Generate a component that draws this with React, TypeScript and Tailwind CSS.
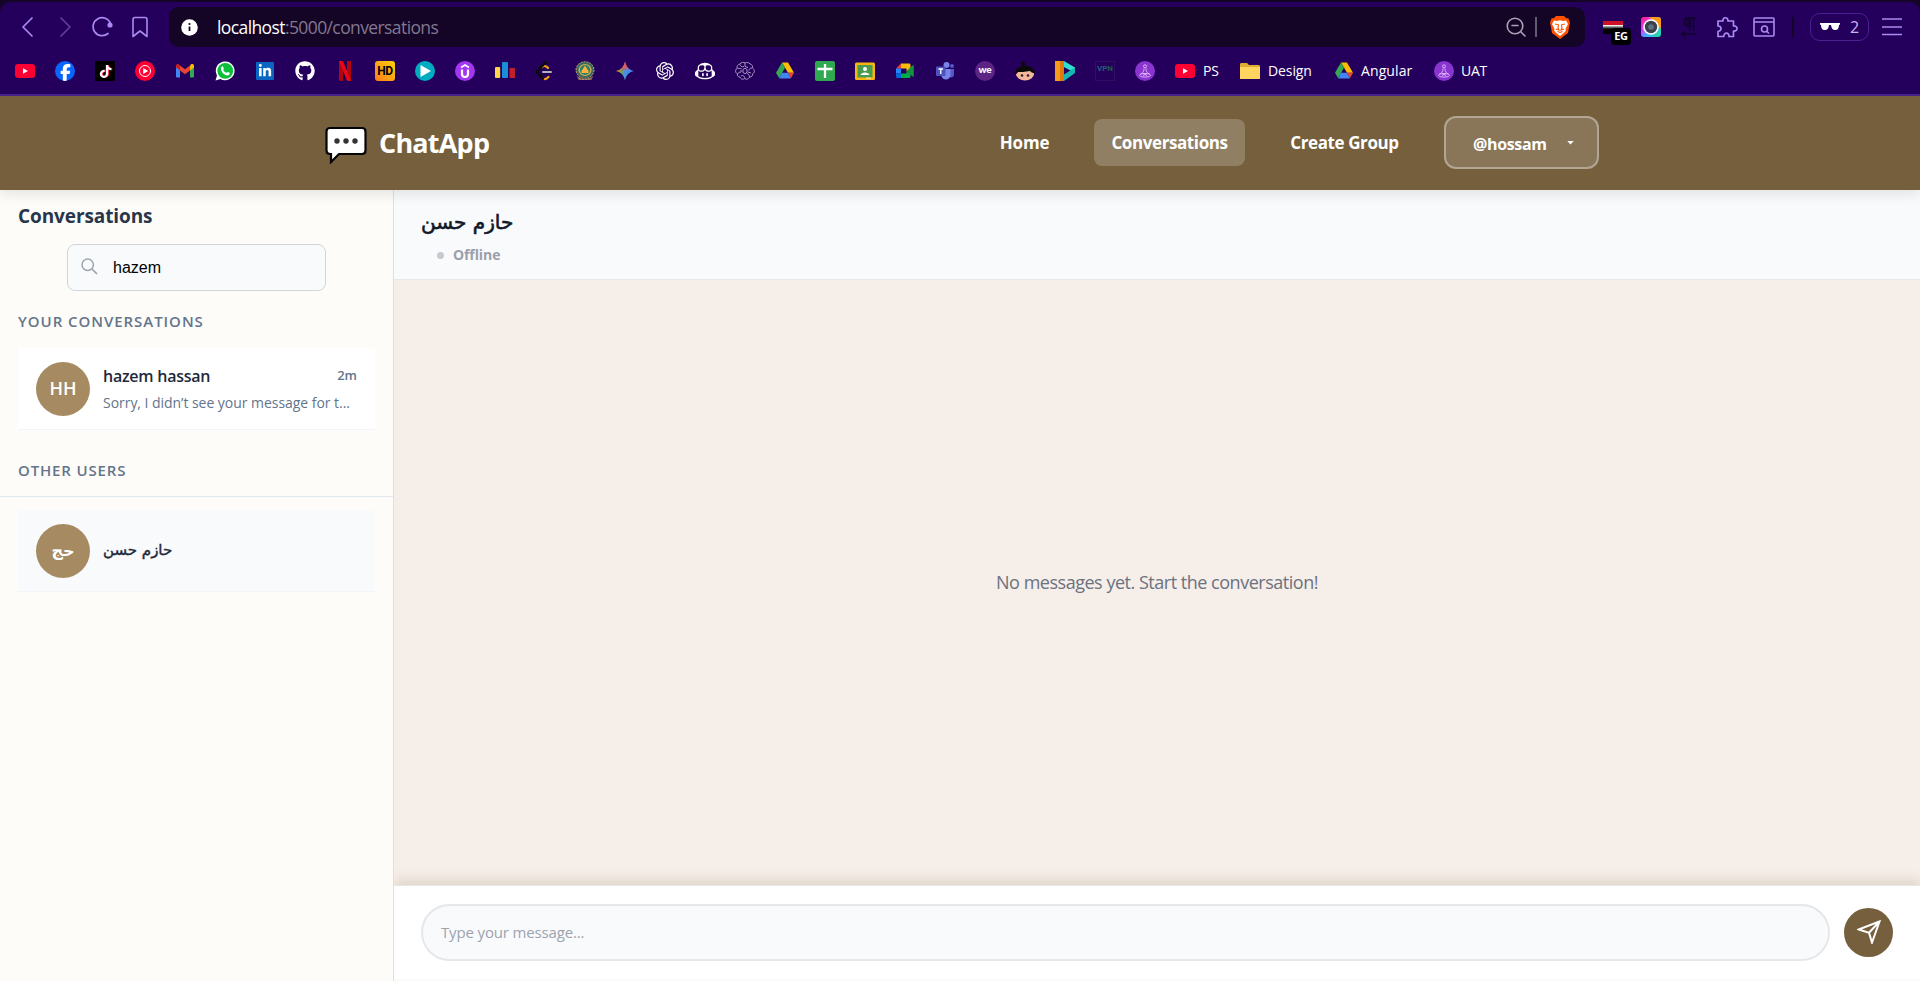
import React from "react";
import { FaFacebookF, FaTiktok, FaWhatsapp, FaLinkedinIn, FaGithub } from "react-icons/fa6";
import { SiOpenai, SiGithubcopilot } from "react-icons/si";

const UI = "font-['Open_Sans','Noto_Sans','DejaVu_Sans',sans-serif]";

function Svg({ children, box = "0 0 20 20", className = "size-5" }: { children: React.ReactNode; box?: string; className?: string }) {
  return (
    <svg viewBox={box} className={`block shrink-0 ${className}`} fill="none">
      {children}
    </svg>
  );
}

function YouTube({ className = "size-5" }: { className?: string }) {
  return (
    <Svg className={className}>
      <rect y="3" width="20" height="14" rx="3" fill="#ff0033" />
      <path d="M8 7.2v5.6l5-2.8z" fill="#fff" />
    </Svg>
  );
}

function Drive() {
  return (
    <Svg>
      <path d="M7 1.5h6l6 10.3h-6z" fill="#fbbc04" />
      <path d="M13 11.8h6l-3.2 5.7z" fill="#ea4335" />
      <path d="M7 1.5 10 6.700 4.200 17.300 1 11.800z" fill="#34a853" />
      <path d="M7 11.800h6l2.800 5.700H4.200z" fill="#4285f4" />
    </Svg>
  );
}

function Yogi() {
  return (
    <Svg>
      <circle cx="10" cy="10" r="10" fill="#8a35d0" />
      <g stroke="#e0b8f8" strokeWidth="0.9">
        <circle cx="10" cy="5.3" r="1.5" />
        <path d="M9 7.500c0 3-1 4.500-4 6M11 7.500c0 3 1 4.500 4 6M8 12.500l4 2M12 12.500l-4 2" />
        <ellipse cx="10" cy="14.300" rx="5.500" ry="1.800" />
      </g>
    </Svg>
  );
}

const bookmarks: React.ReactNode[] = [
  <YouTube />,
  <span className="flex size-5 items-end justify-center overflow-hidden rounded-full bg-[#0866ff]"><FaFacebookF className="size-[17px] text-white" /></span>,
  <span className="flex size-5 items-center justify-center bg-black"><FaTiktok className="size-[13px] text-white drop-shadow-[1px_0_0_#fe2c55]" /></span>,
  <Svg>
    <circle cx="10" cy="10" r="10" fill="#ff0033" />
    <circle cx="10" cy="10" r="5.5" stroke="#fff" strokeWidth="1" />
    <path d="M8.200 7v6l5-3z" fill="#fff" />
  </Svg>,
  <Svg>
    <path d="M1 5v10.500c0 .6.500 1 1 1h3V8z" fill="#4285f4" />
    <path d="M15 8v8.500h3c.6 0 1-.4 1-1V5z" fill="#34a853" />
    <path d="M15 5v4.500l4-3V5c0-2-2-2.500-3.200-1.500z" fill="#fbbc04" />
    <path d="M5 5v4.500l5 3.800 5-3.800V4.500L10 8.300 5 4.500z" fill="#ea4335" />
    <path d="M1 5v1.500l4 3V4.500l-.8-1C3 2.500 1 3 1 5z" fill="#c5221f" />
  </Svg>,
  <span className="relative flex size-5 items-center justify-center">
    <Svg>
      <path d="M.5 19.500 2 14.500A9.400 9.400 0 1 1 5.500 18z" fill="#fff" />
      <circle cx="10.200" cy="9.800" r="7.900" fill="#0bbf3b" />
      <path d="M6.900 5.600c.5-.4 1-.3 1.200.1l.8 1.700c.1.400-.7 1.100-.7 1.400.7 1.500 1.800 2.500 3.200 3 .4.100 1-1 1.400-.9l1.800.9c.5.300 0 1.800-.6 2.200-2 1.200-4.500-.2-6-1.800-1.500-1.600-3-4.600-1.100-6.600z" fill="#fff" />
    </Svg>
  </span>,
  <span className="mx-px flex size-[18px] items-center justify-center rounded-[1px] bg-[#0a66c2]"><FaLinkedinIn className="size-[14px] text-white" /></span>,
  <FaGithub className="size-5 text-white" />,
  <Svg>
    <path d="M4 0h4v20l-4-.4zM12 0h4v20l-4-.5z" fill="#b1060f" />
    <path d="M4 0h4l8 20-4-.5z" fill="#e50914" />
  </Svg>,
  <span className="flex size-5 items-center justify-center rounded-[3px] bg-linear-to-tr from-[#ff7a1a] to-[#ffd000] font-['Roboto',sans-serif] text-[12px] font-bold tracking-[-0.5px] text-black">HD</span>,
  <Svg>
    <circle cx="10" cy="10" r="10" fill="#00acc1" />
    <path d="M5.500 4v12l10.500-6z" fill="#fff" />
  </Svg>,
  <Svg>
    <circle cx="10" cy="10" r="10" fill="#a435f0" />
    <path d="M7 8.500V13c0 4 6 4 6 0V8.500" stroke="#fff" strokeWidth="2.200" />
    <path d="M6 6.500 10 4l4 2.500" stroke="#fff" strokeWidth="1.600" />
  </Svg>,
  <Svg>
    <rect x="0" y="6" width="5.200" height="11" rx="1" fill="#ffd54f" />
    <rect x="7" y="1" width="6" height="16" rx="1" fill="#1a8fd8" />
    <rect x="14.500" y="7" width="5.500" height="10" rx="1" fill="#c2202b" />
  </Svg>,
  <Svg>
    <path d="M7 6C8.500 4.500 11 4.500 13 7M6.500 16C9 19 11 18.500 13.500 16" stroke="#ffa116" strokeWidth="2.200" strokeLinecap="round" />
    <path d="M11 1 3.500 8.500c-1.500 1.500-1.500 3 0 4.500L8 17.500" stroke="#0b0b0b" strokeWidth="2.600" strokeLinecap="round" />
    <path d="M8 11h8" stroke="#b3b3b3" strokeWidth="2" strokeLinecap="round" />
  </Svg>,
  <Svg>
    <ellipse cx="10" cy="9" rx="9" ry="8.300" fill="#3a6b5d" stroke="#c5a46a" strokeWidth="1" strokeDasharray="2 1" />
    <ellipse cx="10" cy="9" rx="6.500" ry="6" fill="#d3b054" />
    <ellipse cx="10" cy="9" rx="5.200" ry="5" fill="#2f8069" />
    <path d="M10 4.500l1.500 2.500 2 3v2h-7v-2l2-3z" fill="#ffb13b" />
    <path d="M1.500 14.500c4.500 3.500 12.500 3.500 17 0l-2 4.500h-13z" fill="#79605c" />
    <path d="M4 17.500c4 1.500 8 1.500 12 0" stroke="#c5a46a" strokeWidth=".8" strokeDasharray="2 1" />
  </Svg>,
  <Svg>
    <defs>
      <linearGradient id="gem" x1="1" y1="10" x2="19" y2="10" gradientUnits="userSpaceOnUse">
        <stop stopColor="#f4b400" /><stop offset=".3" stopColor="#5fb05a" /><stop offset=".5" stopColor="#4a90e8" /><stop offset="1" stopColor="#4285f4" />
      </linearGradient>
      <linearGradient id="gem2" x1="9" y1="1" x2="11" y2="10" gradientUnits="userSpaceOnUse">
        <stop stopColor="#f0483e" /><stop offset=".5" stopColor="#ea5a50" /><stop offset="1" stopColor="#ea4335" stopOpacity="0" />
      </linearGradient>
    </defs>
    <path d="M10 .5c1.300 5.500 3.500 8 9 9.500-5.500 1.500-7.700 4-9 9.500C8.700 14 6.500 11.500 1 10c5.500-1.500 7.700-4 9-9.500z" fill="url(#gem)" />
    <path d="M10 .5c1.300 5.500 3.500 8 9 9.500-5.500 1.500-7.700 4-9 9.500C8.700 14 6.500 11.500 1 10c5.500-1.500 7.700-4 9-9.500z" fill="url(#gem2)" />
  </Svg>,
  <SiOpenai className="mx-px size-[18px] text-white" />,
  <SiGithubcopilot className="size-5 text-white" />,
  <Svg>
    <g stroke="#b5a5cd" strokeWidth="0.9">
      <path d="M5 3c1-2 4-2 5-1 2-1 4-.5 5 1 2 .2 3 2 2.500 4 2.500 2 2.500 4.500 0 6 .3 2-1 3-3 3-.5 2-3.500 3-5 1.500C8 19 5.500 18 5 16c-2 0-3-1.500-2.500-3C0 11.500 0 9 2 7.500 1.500 5 3 3.500 5 3z" />
      <path d="M5 3.500c.5 2 2 2.500 4 2M10 2v3.500l3 1M17 7c-2 0-3 1-3 2.500M2.500 7.500c2-.5 3 .5 4 0M2.500 13c1-2 2.500-2 3.500-1.500M14.500 16c0-2-1-3-2.500-3.500M6 15c2-1 3-.5 4 2.500M5 10h2M13 11l3 1" />
      <ellipse cx="10" cy="10" rx="2.200" ry="2.600" />
    </g>
  </Svg>,
  <Drive />,
  <Svg>
    <rect width="20" height="20" rx="2" fill="#2fa84f" />
    <path d="M2.500 8h15M10 3v14" stroke="#fff" strokeWidth="2.300" />
  </Svg>,
  <Svg>
    <rect y="1.500" width="20" height="17.500" rx="1.500" fill="#f6b50f" />
    <rect x="2.500" y="4" width="15" height="12.500" fill="#4a9b4f" />
    <circle cx="10" cy="8" r="2" fill="#fff" />
    <path d="M5.500 14c.5-3.500 8.500-3.500 9 0z" fill="#fff" />
    <path d="M11 16.500h5v1.300h-5z" fill="#fff" opacity=".6" />
  </Svg>,
  <Svg>
    <path d="M6 2.500v5H1z" fill="#ea4335" />
    <path d="M6 2.500h8c.9 0 1.500.6 1.500 1.500v4.500L11.500 10V7.500H6z" fill="#fbbc04" />
    <path d="M1 7.500h5v5H1z" fill="#2684fc" />
    <path d="M1 12.500h5V17H2.500c-.9 0-1.500-.6-1.500-1.500z" fill="#0066da" />
    <path d="M6 12.500h5.500V10l4 3v2.500c0 .9-.6 1.500-1.500 1.500H6z" fill="#00ac47" />
    <path d="m11.500 10 6-5.500c.7-.5 1.300-.2 1.300.5v10c0 .7-.6 1-1.300.5z" fill="#18913f" />
  </Svg>,
  <Svg>
    <circle cx="11.500" cy="4" r="3" fill="#7b83eb" /><circle cx="17" cy="5" r="2" fill="#5059c9" />
    <path d="M14 8h5v5c0 3-2 4-4 3z" fill="#5059c9" />
    <path d="M6 8h9.500v6c0 5-7.500 6.500-9 1z" fill="#7b83eb" />
    <rect x="1" y="5.500" width="9.500" height="9.500" rx="1" fill="#4b53bc" />
    <path d="M3.500 8h4.500M5.750 8v5" stroke="#fff" strokeWidth="1.300" />
  </Svg>,
  <span className="flex size-5 items-center justify-center rounded-full bg-[#5c2483] pb-[3px] font-['Lato',sans-serif] text-[10px] font-black tracking-[-0.300px] text-white">we</span>,
  <Svg>
    <circle cx="8" cy="2.500" r="2" fill="#0a0a0a" /><path d="M7.500 4h3l-.5 3H8z" fill="#0a0a0a" />
    <ellipse cx="10" cy="13" rx="9" ry="6.500" fill="#f6b79c" />
    <path d="M0 13C0 7.500 4 5 10 5s10 2.500 10 7.500c-3-.5-4-1.500-5-2.500-5 1-10 1-12 1-.5 1-1 2-3 2z" fill="#0a0a0a" />
    <circle cx="7" cy="14.500" r="1.300" fill="#222" /><circle cx="13" cy="14.500" r="1.300" fill="#222" />
  </Svg>,
  <Svg>
    <path d="M0 0h9v20H0z" fill="#f59a1b" /><path d="M5 0h4v20H5z" fill="#e0780c" />
    <path d="m9 0 11 6.500v5.500L9 6z" fill="#2fe0d0" /><path d="M9 20l11-8V6.500L9 13.500z" fill="#14b8b0" />
  </Svg>,
  <span className="flex size-5 items-center justify-center border border-[#2d1060] pb-1 font-['Roboto',sans-serif] text-[8px] font-bold text-[#285a82]">VP<span className="text-[#235848]">N</span></span>,
  <Yogi />,
];

function BrowserChrome() {
  return (
    <div className="h-24 shrink-0 bg-[#140426] pt-[2px]">
      <div className="flex h-[94px] flex-col rounded-t-[10px] border-b-2 border-[#4a2191] bg-[#24005c]">
        <div className="flex h-[50px] items-center">
          <div className="flex w-[169px] items-center pl-[17px] text-[#a98af0]">
            <Svg box="0 0 20 22" className="h-[22px] w-5"><path d="M15 2 6 11l9 9" stroke="currentColor" strokeWidth="1.700" strokeLinecap="round" strokeLinejoin="round" /></Svg>
            <Svg box="0 0 20 22" className="ml-[18px] h-[22px] w-5 opacity-45"><path d="m6 2 9 9-9 9" stroke="currentColor" strokeWidth="1.700" strokeLinecap="round" strokeLinejoin="round" /></Svg>
            <Svg box="0 0 22 22" className="ml-4 size-[22px]">
              <path d="M19.500 7.500A9 9 0 1 0 17 17.500" stroke="currentColor" strokeWidth="1.700" strokeLinecap="round" />
              <circle cx="19" cy="9" r="2.600" fill="currentColor" />
            </Svg>
            <Svg box="0 0 16 22" className="ml-[19px] h-[22px] w-4"><path d="M1 3.500C1 2 2 1.500 3 1.500h10c1.500 0 2 .8 2 2V20.500L8 15l-7 5.500z" stroke="currentColor" strokeWidth="1.600" strokeLinejoin="round" /></Svg>
          </div>
          <div className="flex h-10 w-[1416px] items-center rounded-[10px] bg-[#140426] pl-3">
            <Svg box="0 0 17 17" className="mt-px size-[17px]"><circle cx="8.500" cy="8.500" r="8.300" fill="#fff" /><path d="M8.500 7.500V12" stroke="#140426" strokeWidth="1.800" /><circle cx="8.500" cy="5" r="1.100" fill="#140426" /></Svg>
            <div className="ml-[19px] flex-1 text-[17.500px] tracking-[-0.600px] text-white">localhost<span className="text-[#82788f]">:5000/conversations</span></div>
            <Svg className="size-5"><circle cx="9" cy="9" r="7.800" stroke="#aaa2b5" strokeWidth="1.600" /><path d="M6 8.500h6M15 15l4 4" stroke="#aaa2b5" strokeWidth="1.600" strokeLinecap="round" /></Svg>
            <span className="ml-[9px] h-5 w-[2px] bg-[#645a71]" />
            <Svg box="0 0 20 23" className="mr-[15px] ml-[13px] h-[23px] w-5">
              <path d="M6 0h8l2 2 2.500.5 1.500 4L18 17l-8 6-8-6L0 6.500l1.500-4L4 2z" fill="#ff5000" />
              <path d="M4 4.500l3 .5 3-.7 3 .7 3-.5 2 3.500-2.500 5 .3 2-2.800 2.500L10 20l-3-2.500L4.200 15l.3-2L2 8z" fill="#fff" />
              <path d="M5 8l3.500.8-.5 3 1 2.200L6 13M15 8l-3.500.8.5 3-1 2.200 3-1M7.500 15.500l2.500 1 2.500-1" stroke="#ff5000" strokeWidth="1.100" />
            </Svg>
          </div>
          <div className="flex flex-1 items-center pl-[18px] text-[#a98af0]">
            <span className="relative mr-[18px] block h-[13px] w-5 bg-linear-to-b from-[#ce1126] from-33% via-white via-33% to-black to-66%">
              <span className="absolute top-[7px] left-[8px] flex h-[17px] w-5 items-center justify-center rounded-[4px] bg-black text-[11px] font-bold tracking-[-0.300px] text-white">EG</span>
            </span>
            <Svg>
              <defs><linearGradient id="cam" x1="0" y1="0" x2="1" y2="1"><stop stopColor="#ff1a6b" /><stop offset=".35" stopColor="#e33dff" /><stop offset=".6" stopColor="#35b6ff" /><stop offset="1" stopColor="#28e08c" /></linearGradient></defs>
              <rect width="20" height="20" rx="3" fill="url(#cam)" /><path d="M8 0h9a3 3 0 0 1 3 3v9z" fill="#ff9b1a" />
              <circle cx="10" cy="10" r="7.800" fill="#fff" /><circle cx="10" cy="10" r="6.200" fill="#39424c" /><circle cx="10" cy="10" r="2.800" fill="#60717f" />
            </Svg>
            <Svg className="ml-5 size-5"><path d="M15 1H7a3.500 3.500 0 0 0 0 8h2M9 1v13M12.500 1v13M1 17h14M4 14.500 1 17l3 2.500" stroke="#100228" strokeWidth="1.500" /><path d="M7 1.500a3.500 3.500 0 0 0 0 7h2v-7z" fill="#100228" opacity=".5" /></Svg>
            <Svg box="0 0 22 22" className="ml-[15px] size-[22px]"><path d="M2 5h5c-.8-4 5-4.700 5 0h5.500v5c4.700-.6 4.700 5.500 0 5v5.500h-4.500c.5-4.500-5.500-4.500-5.200 0H2v-5c4-.5 4-5.500 0-5.500z" stroke="currentColor" strokeWidth="1.700" strokeLinejoin="round" /></Svg>
            <Svg box="0 0 22 20" className="ml-[15px] h-5 w-[22px]"><rect x="1" y="1" width="20" height="18" rx="1" stroke="currentColor" strokeWidth="1.600" /><path d="M1 5h20M13.500 14l2.500 2.500" stroke="currentColor" strokeWidth="1.600" /><circle cx="11.500" cy="12" r="3" stroke="currentColor" strokeWidth="1.600" /></Svg>
            <span className="ml-[17px] h-5 w-[2px] bg-[#140426]" />
            <div className="ml-4 flex h-7 w-[59px] items-center rounded-[10px] border border-[#4a2191] pl-[9px] text-[16px] text-[#c9b6ef]">
              <Svg box="0 0 20 10" className="mr-[10px] h-[10px] w-5"><path d="M0 1h20v1.500l-1 .5c-.3 4-1.500 5-4 5-2.500 0-3.500-1.500-4-5h-2c-.5 3.500-1.500 5-4 5S1.300 7 1 3L0 2.500z" fill="#fff" /></Svg>
              2
            </div>
            <Svg box="0 0 22 20" className="ml-[12px] h-5 w-[22px]"><path d="M1 2h20M1 10h20M1 17.500h20" stroke="currentColor" strokeWidth="1.700" /></Svg>
          </div>
        </div>
        <div className="flex h-[38px] items-center gap-5 pl-[15px] text-[14px] text-white">
          {bookmarks.map((icon, i) => (
            <React.Fragment key={i}>{icon}</React.Fragment>
          ))}
          <div className="flex items-center gap-2"><YouTube /><span className="w-[17px] pb-px tracking-[-0.200px]">PS</span></div>
          <div className="flex items-center gap-2">
            <Svg><path d="M0 3.500c0-1 .5-1.500 1.500-1.500H7l2 2h9.500c1 0 1.500.5 1.500 1.500V17c0 .7-.5 1-1 1H1c-.6 0-1-.3-1-1z" fill="#e0ac33" /><path d="M0 6h20v11c0 .6-.5 1-1 1H1c-.6 0-1-.4-1-1z" fill="#ffd560" /></Svg>
            <span className="w-[46px] pb-px tracking-[-0.100px]">Design</span>
          </div>
          <div className="flex items-center gap-[7px]"><Drive /><span className="w-[53px] pb-px tracking-[0.100px]">Angular</span></div>
          <div className="flex items-center gap-[7px]"><Yogi /><span className="pb-px tracking-[-0.300px]">UAT</span></div>
        </div>
      </div>
    </div>
  );
}

function AppHeader() {
  return (
    <header className="z-10 flex h-[94px] shrink-0 items-center bg-[#755f3d] pr-[321px] pb-px pl-[325px] font-bold text-white shadow-[0_4px_12px_rgba(0,0,0,0.1)]">
      <Svg box="0 0 42 38" className="mt-1 h-[38px] w-[42px]">
        <path d="M5 2h32c2.300 0 3.500 1.300 3.500 3.500v19c0 2.200-1.200 3.500-3.500 3.500H14l-8 8v-8H5c-2.200 0-3.500-1.300-3.500-3.500v-19C1.500 3.300 2.800 2 5 2z" fill="#fff" stroke="#050505" strokeWidth="2.200" />
        <circle cx="12" cy="15" r="2.700" fill="#333" /><circle cx="21" cy="15" r="2.700" fill="#333" /><circle cx="30" cy="15" r="2.700" fill="#333" />
      </Svg>
      <span className="ml-[12px] flex-1 pt-px text-[27px] tracking-[-0.800px]">ChatApp</span>
      <nav className="flex items-center gap-[27px] text-[17px] tracking-[-0.400px]">
        <a className="flex h-[47px] w-[85px] items-center justify-center tracking-[-0.200px]">Home</a>
        <a className="flex h-[47px] w-[151px] items-center justify-center rounded-lg bg-white/20">Conversations</a>
        <a className="flex h-[47px] w-[145px] items-center justify-center whitespace-nowrap">Create Group</a>
      </nav>
      <button className="ml-[27px] flex h-[53px] w-[155px] items-center rounded-xl border-2 border-white/35 bg-white/15 pt-[2px] pl-[27px] text-[16px] font-bold tracking-[-0.350px]">
        <span className="w-[75px] text-left">@hossam</span>
        <Svg box="0 0 8 5" className="ml-[19px] mb-px h-[4px] w-[7px]"><path d="M0 0h8L4 4.500z" fill="#fff" /></Svg>
      </button>
    </header>
  );
}

function Avatar({ children }: { children: React.ReactNode }) {
  return <div className="flex size-[54px] shrink-0 items-center justify-center rounded-full bg-[#a68b62] text-[18px] font-semibold text-white">{children}</div>;
}

function Sidebar() {
  return (
    <aside className="flex w-[394px] shrink-0 flex-col border-r border-[#dcdfe3] bg-[#fdfcf8]">
      <h2 className="mt-3 ml-[18px] h-7 text-[19px] leading-7 font-bold tracking-[-0.100px] text-[#27364b]">Conversations</h2>
      <div className="mt-[14px] ml-[67px] flex h-[47px] w-[259px] items-center rounded-lg border border-[#d1d5db] bg-[#f9fafc] pl-[13px]">
        <Svg box="0 0 17 17" className="mb-[3px] size-[17px]"><circle cx="6.700" cy="6.700" r="5.700" stroke="#9ca3af" strokeWidth="1.500" /><path d="m11 11 5 5" stroke="#9ca3af" strokeWidth="1.700" /></Svg>
        <span className="ml-[15px] font-['Liberation_Sans',sans-serif] text-[16px] text-black">hazem</span>
      </div>
      <h3 className="mt-[20px] ml-[18px] h-5 text-[15px] leading-5 font-semibold tracking-[0.950px] text-[#64748b]">YOUR CONVERSATIONS</h3>
      <div className="mt-[17px] ml-[18px] flex h-[82px] w-[357px] items-center border-b border-[#f1f5f9] bg-white px-[18px]">
        <Avatar>HH</Avatar>
        <div className="ml-[13px] min-w-0 flex-1">
          <div className="flex h-6 items-center justify-between">
            <span className="text-[16px] font-semibold tracking-[-0.250px] text-[#1e293b]">hazem hassan</span>
            <span className="text-[13px] font-semibold text-[#64748b]">2m</span>
          </div>
          <div className="mt-[5px] h-5 text-[14px] leading-5 tracking-[-0.040px] whitespace-nowrap text-[#64748b]">Sorry, I didn’t see your message for t...</div>
        </div>
      </div>
      <h3 className="mt-[30px] ml-[18px] h-5 text-[15px] leading-5 font-semibold tracking-[0.850px] text-[#64748b]">OTHER USERS</h3>
      <div className="mt-[16px] h-px bg-[#e2e8f0]" />
      <div className="mt-[13px] ml-[18px] flex h-[82px] w-[357px] items-center border-b border-[#f1f5f9] bg-[#f9fafc] px-[18px]">
        <Avatar><span className="font-['DejaVu_Sans',sans-serif] text-[16px] font-bold" dir="rtl">حج</span></Avatar>
        <span dir="rtl" className="ml-[13px] font-['DejaVu_Sans',sans-serif] text-[15px] font-normal text-[#1e293b] [-webkit-text-stroke:0.4px_#1e293b]">حازم حسن</span>
      </div>
    </aside>
  );
}

function Chat() {
  return (
    <main className="flex min-w-0 flex-1 flex-col overflow-hidden">
      <div className="h-[90px] shrink-0 border-b border-[#e5e7eb] bg-[#f9fafc] pt-[16px] pl-[27px]">
        <div className="h-8 font-['DejaVu_Sans',sans-serif] text-[20px] leading-8 font-normal text-[#111827] [-webkit-text-stroke:0.6px_#111827]"><span dir="rtl">حازم حسن</span></div>
        <div className="mt-[6px] ml-4 flex h-5 items-center gap-[9px] text-[14px] font-bold tracking-[-0.100px] text-[#9a9fab]">
          <span className="mt-[3px] size-[7px] rounded-full bg-[#c6c9d0]" />Offline
        </div>
      </div>
      <div className="flex flex-1 items-center justify-center bg-[#f6eee8] text-[18px] tracking-[-0.480px] text-[#6b7280]">No messages yet. Start the conversation!</div>
      <div className="flex h-[96px] shrink-0 items-center border-t border-[#e5e7eb] border-b-2 border-b-[#fafafa] bg-white pr-[27px] pb-px pl-[27px] shadow-[0_-4px_12px_rgba(117,95,61,0.2)]">
        <div className="flex h-[57px] flex-1 items-center rounded-full border-2 border-[#e5e7eb] bg-[#f9fafc] pl-[18px] text-[15px] tracking-[-0.150px] text-[#9ca3af]">Type your message...</div>
        <button className="ml-[14px] flex size-[49px] items-center justify-center rounded-full bg-[#755f3d]">
          <Svg box="0 0 24 24" className="size-6"><path d="M22.500 1.500 1.500 9.500l10.500 3.200L15 22.500z M22.500 1.500 12 12.700" stroke="#fff" strokeWidth="2" /></Svg>
        </button>
      </div>
    </main>
  );
}

export default function App() {
  return (
    <div className={`flex h-[981px] w-[1920px] flex-col overflow-hidden ${UI}`}>
      <BrowserChrome />
      <AppHeader />
      <div className="flex min-h-0 flex-1">
        <Sidebar />
        <Chat />
      </div>
    </div>
  );
}
